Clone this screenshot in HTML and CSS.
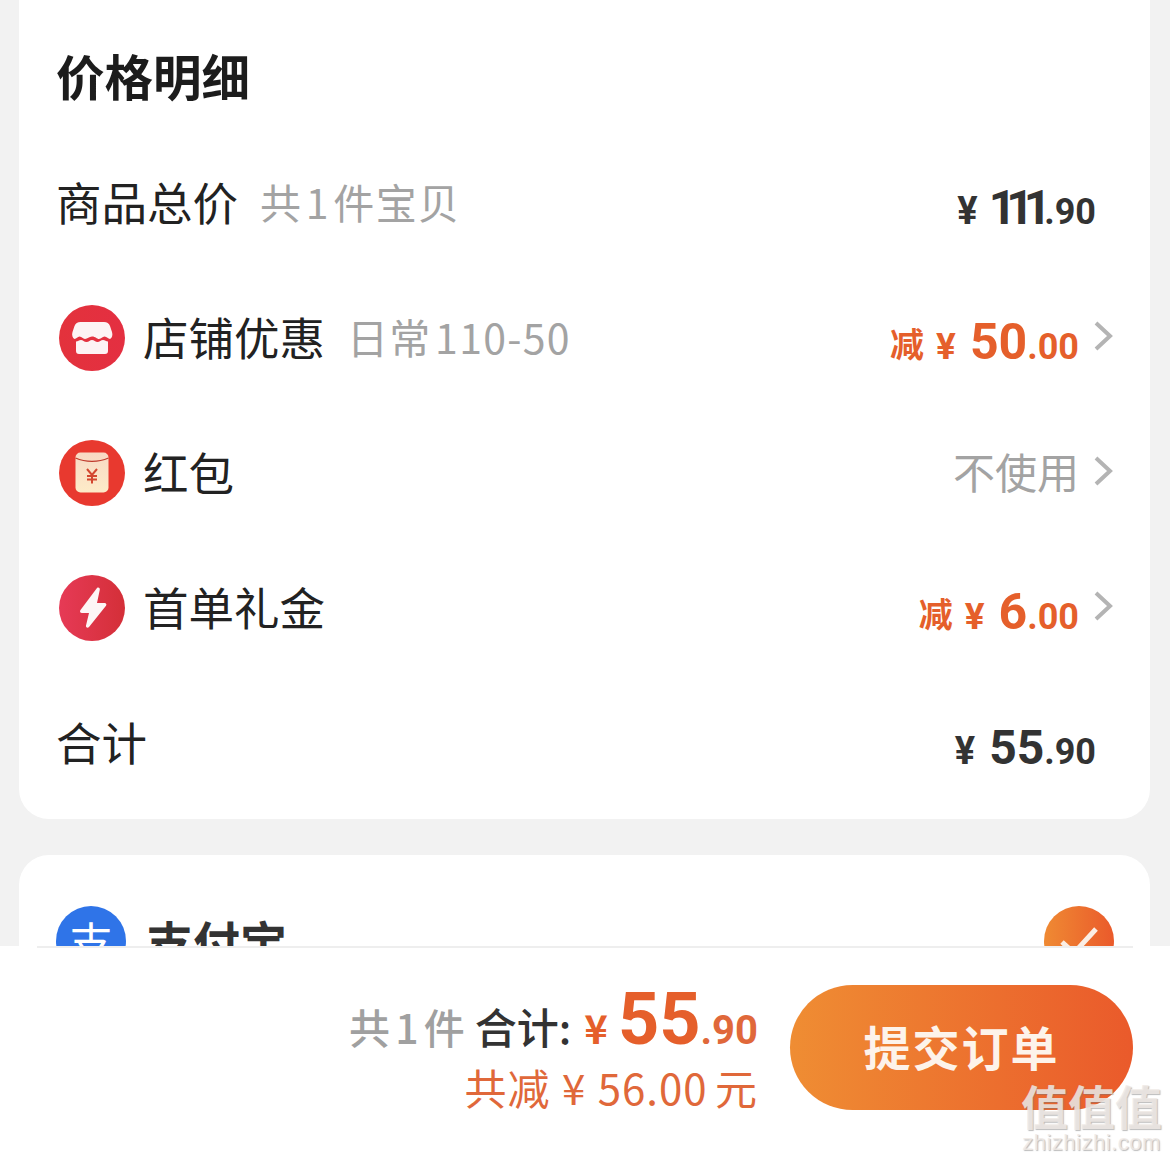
FILE: index.html
```html
<!DOCTYPE html>
<html lang="zh-CN">
<head>
    <meta charset="UTF-8">
    <meta name="viewport" content="width=device-width, initial-scale=1.0">
    <title>价格明细</title>
    <link rel="stylesheet" href="styles.css">
</head>
<body>
    <div class="page">
        <main class="content">
            <section class="card price-card">
                <h2 class="card-title">价格明细</h2>

                <div class="row">
                    <div class="row-left">
                        <span class="row-label">商品总价</span>
                        <span class="row-note">共 1 件宝贝</span>
                    </div>
                    <div class="amount amount-plain amount-first">
                        <span class="yen">¥</span><span class="int tight">111</span><span class="dec">.90</span>
                    </div>
                </div>

                <div class="row">
                    <div class="row-left">
                        <svg class="row-icon" viewBox="0 0 66 66">
                            <defs>
                                <linearGradient id="shopBg" x1="0" x2="1" y1="0" y2="0">
                                    <stop offset="0" stop-color="#e3323c"/>
                                    <stop offset="1" stop-color="#e42f41"/>
                                </linearGradient>
                            </defs>
                            <circle cx="33" cy="33" r="33" fill="url(#shopBg)"/>
                            <path d="M21 17h24c3 0 5 1.500 6 4l2 6c1 3 0 6 -2 7 -2 0 -3 -2.500 -5.500 -2.500 -2.200 0 -3.200 2.500 -5.500 2.500 -2.200 0 -3.300 -2.500 -7 -2.500 -3 0 -4.500 2.500 -7 2.500 -2.200 0 -3 -2.500 -5.500 -2.500 -2 0 -3 2.500 -5 2.500 -2 -1 -3 -4 -2 -7l2 -6c1 -2.500 3 -4 6 -4z" fill="#fdf3f4"/>
                            <path d="M17 36.500c2 0 3 -1.500 5 -1.500s3 2 5.500 2 3.500 -2 5.500 -2 3.500 2 5.500 2 3.500 -2 5.500 -2 3 1.500 5 1.500V46c0 2 -1 3 -3 3H20c-2 0 -3 -1 -3 -3z" fill="#fdf3f4"/>
                        </svg>
                        <span class="row-label">店铺优惠</span>
                        <span class="row-note">日常 110-50</span>
                    </div>
                    <div class="row-right">
                        <div class="amount amount-off">
                            <span class="off-word">减</span><span class="yen">¥</span><span class="int">50</span><span class="dec">.00</span>
                        </div>
                        <svg class="chevron" viewBox="0 0 20 32"><path d="M3 3l14 13L3 29" /></svg>
                    </div>
                </div>

                <div class="row">
                    <div class="row-left">
                        <svg class="row-icon" viewBox="0 0 66 66">
                            <defs>
                                <linearGradient id="packetFill" x1="0" x2="0" y1="0" y2="1">
                                    <stop offset="0" stop-color="#f8d9c4"/>
                                    <stop offset="1" stop-color="#fdebc8"/>
                                </linearGradient>
                            </defs>
                            <circle cx="33" cy="33" r="33" fill="#e8392f"/>
                            <rect x="16.500" y="12.500" width="33" height="40" rx="5" fill="url(#packetFill)"/>
                            <path d="M16.500 18c10 4.500 23 4.500 33 0" fill="none" stroke="#bf3a2c" stroke-width="1.200"/>
                            <path d="M28 29l5 6 5 -6M33 35v8.500M28 36h10M28 39.500h10" fill="none" stroke="#d3472f" stroke-width="2"/>
                        </svg>
                        <span class="row-label">红包</span>
                    </div>
                    <div class="row-right">
                        <span class="unused">不使用</span>
                        <svg class="chevron" viewBox="0 0 20 32"><path d="M3 3l14 13L3 29" /></svg>
                    </div>
                </div>

                <div class="row">
                    <div class="row-left">
                        <svg class="row-icon" viewBox="0 0 66 66">
                            <defs>
                                <linearGradient id="boltBg" x1="0" x2="1" y1="0" y2="0">
                                    <stop offset="0" stop-color="#e63a56"/>
                                    <stop offset="1" stop-color="#d42f38"/>
                                </linearGradient>
                            </defs>
                            <circle cx="33" cy="33" r="33" fill="url(#boltBg)"/>
                            <path d="M38 13c1.500 -1 3 0 2.800 1.800L38 28h7.500c1.800 0 2.400 1.500 1.500 2.800L30 52c-1.300 1.500 -3.500 .5 -3 -1.500L30 38h-7c-2 0 -2.500 -1.500 -1.500 -3z" fill="#fdf6f6"/>
                        </svg>
                        <span class="row-label">首单礼金</span>
                    </div>
                    <div class="row-right">
                        <div class="amount amount-off">
                            <span class="off-word">减</span><span class="yen">¥</span><span class="int">6</span><span class="dec">.00</span>
                        </div>
                        <svg class="chevron" viewBox="0 0 20 32"><path d="M3 3l14 13L3 29" /></svg>
                    </div>
                </div>

                <div class="row">
                    <div class="row-left">
                        <span class="row-label">合计</span>
                    </div>
                    <div class="amount amount-plain amount-first">
                        <span class="yen">¥</span><span class="int">55</span><span class="dec">.90</span>
                    </div>
                </div>
            </section>

            <section class="card pay-card">
                <div class="pay-row">
                    <div class="row-left">
                        <span class="pay-logo">支</span>
                        <span class="pay-name">支付宝</span>
                    </div>
                    <svg class="pay-check" viewBox="0 0 70 70">
                        <defs>
                            <linearGradient id="checkBg" x1="0" x2="1" y1="0" y2="0">
                                <stop offset="0" stop-color="#ef8a33"/>
                                <stop offset="1" stop-color="#ea5a2b"/>
                            </linearGradient>
                        </defs>
                        <circle cx="35" cy="35" r="35" fill="url(#checkBg)"/>
                        <path d="M18 36l12 11 22 -24" fill="none" stroke="#fbeee4" stroke-width="5"/>
                    </svg>
                </div>
            </section>
        </main>

        <footer class="bar">
            <div class="bar-sum">
                <div class="sum-line">
                    <span class="sum-count">共 1 件</span>
                    <span class="sum-label">合计:</span>
                    <span class="sum-yen">¥</span><span class="sum-int">55</span><span class="sum-dec">.90</span>
                </div>
                <div class="sum-off">共减 ¥ 56.00 <span class="off-unit">元</span></div>
            </div>
            <button class="submit" type="button">提交订单</button>
        </footer>

        <div class="watermark">
            <div class="wm-mark">值值值</div>
            <div class="wm-site">zhizhizhi.com</div>
        </div>
    </div>
</body>
</html>
```

FILE: styles.css
```css
* {
    box-sizing: border-box;
}
body {
    margin: 0;
    font-family: "Noto Sans CJK SC", "Noto Sans", sans-serif;
    color: #222;
    background: #f2f2f2;
}
.page {
    position: relative;
    display: flex;
    flex-direction: column;
    height: 1163px;
    overflow: hidden;
}
.content {
    height: 946px;
    overflow: hidden;
    padding: 0 20px 0 19px;
}
.card {
    background: #fff;
    border-radius: 30px;
}
.price-card {
    height: 849px;
    margin-top: -30px;
    padding: 57px 36px 0 38px;
}
.card-title {
    margin: 0 0 0 -1px;
    height: 106px;
    font-size: 48.5px;
    line-height: 96px;
    font-weight: 700;
    color: #1c1c1c;
}
.row {
    display: flex;
    align-items: center;
    justify-content: space-between;
    height: 135px;
}
.row-left {
    display: flex;
    align-items: center;
}
.row-right {
    display: flex;
    align-items: center;
}
.row-icon {
    width: 66px;
    height: 66px;
    margin: 4px 19px 0 2px;
}
.row-label {
    font-size: 45.5px;
    color: #222;
    margin-left: -1px;
}
.row-note {
    margin-left: 22px;
    font-size: 41px;
    color: #a3a3a3;
    word-spacing: -7px;
    letter-spacing: 1.3px;
}
.amount {
    display: flex;
    align-items: baseline;
    padding-top: 13px;
    font-family: "Roboto", sans-serif;
    font-weight: 700;
}
.amount-first {
    margin-right: 18px;
}
.amount-plain {
    color: #333;
}
.amount-plain .yen {
    font-size: 38px;
    margin-right: 14px;
}
.amount-plain .int {
    font-size: 48px;
}
.amount-plain .int.tight {
    letter-spacing: -10px;
    margin-left: -3px;
    margin-right: 3px;
}
.amount-plain .dec {
    font-size: 36px;
}
.amount-off {
    color: #e55f2b;
}
.off-word {
    font-family: "Noto Sans CJK SC", sans-serif;
    font-size: 34px;
    margin-right: 12px;
    transform: translateY(-2px);
}
.amount-off .yen {
    font-size: 37px;
    margin-right: 14px;
}
.amount-off .int {
    font-size: 50px;
}
.amount-off .dec {
    font-size: 36px;
}
.chevron {
    width: 20px;
    height: 32px;
    margin: 0 1px 0 14px;
    fill: none;
    stroke: #b4b4b4;
    stroke-width: 4;
}
.unused {
    font-size: 42px;
    color: #a3a3a3;
}
.pay-card {
    height: 200px;
    margin-top: 36px;
    padding: 51px 36px 0 37px;
}
.pay-row {
    display: flex;
    justify-content: space-between;
}
.pay-logo {
    width: 70px;
    height: 70px;
    border-radius: 50%;
    background: #2f74e8;
    color: #fff;
    text-align: center;
    font-size: 44px;
    line-height: 70px;
}
.pay-name {
    margin-left: 20px;
    font-size: 47px;
    font-weight: 700;
    line-height: 66px;
    color: #333;
}
.pay-check {
    width: 70px;
    height: 70px;
}
.bar {
    flex: 1;
    display: flex;
    justify-content: flex-end;
    background: #fff;
    padding: 39px 37px 0;
    position: relative;
}
.bar::before {
    content: "";
    position: absolute;
    top: 0;
    left: 37px;
    right: 37px;
    height: 2px;
    background: #eeeeee;
}
.bar-sum {
    display: flex;
    flex-direction: column;
    align-items: flex-end;
    margin-top: -8px;
    margin-right: 32px;
}
.sum-line {
    display: flex;
    align-items: baseline;
    font-weight: 700;
    height: 66px;
}
.sum-count {
    font-size: 41px;
    font-weight: 500;
    color: #a0a0a0;
    word-spacing: -4px;
}
.sum-label {
    margin-left: 10px;
    font-size: 42px;
    font-weight: 500;
    color: #333;
}
.sum-yen {
    margin-left: 13px;
    font-size: 40px;
    color: #e55f2b;
}
.sum-int {
    margin-left: 10px;
    font-family: "Roboto", sans-serif;
    font-size: 72px;
    color: #e55f2b;
}
.sum-dec {
    font-family: "Roboto", sans-serif;
    font-size: 40px;
    color: #e0683a;
}
.sum-off {
    font-size: 42px;
    letter-spacing: 1px;
    word-spacing: 1px;
    color: #e0683a;
    margin-top: 13px;
}
.off-unit {
    margin-left: -4px;
}
.submit {
    width: 343px;
    height: 125px;
    border: none;
    border-radius: 63px;
    padding-bottom: 6px;
    background: linear-gradient(90deg, #ef8d33, #ea5a2b);
    color: #fdf3ea;
    font-family: inherit;
    font-size: 47px;
    font-weight: 700;
    letter-spacing: 2px;
}
.watermark {
    position: absolute;
    right: 8px;
    bottom: 7px;
    text-align: center;
    color: rgba(240, 234, 230, 0.85);
    text-shadow: 1px 1px 1px rgba(120, 120, 120, 0.5);
}
.wm-mark {
    font-size: 47px;
    line-height: 50px;
    font-weight: 700;
}
.wm-site {
    font-family: "Liberation Sans", sans-serif;
    font-size: 22px;
    line-height: 26px;
    letter-spacing: 0.5px;
}
```
